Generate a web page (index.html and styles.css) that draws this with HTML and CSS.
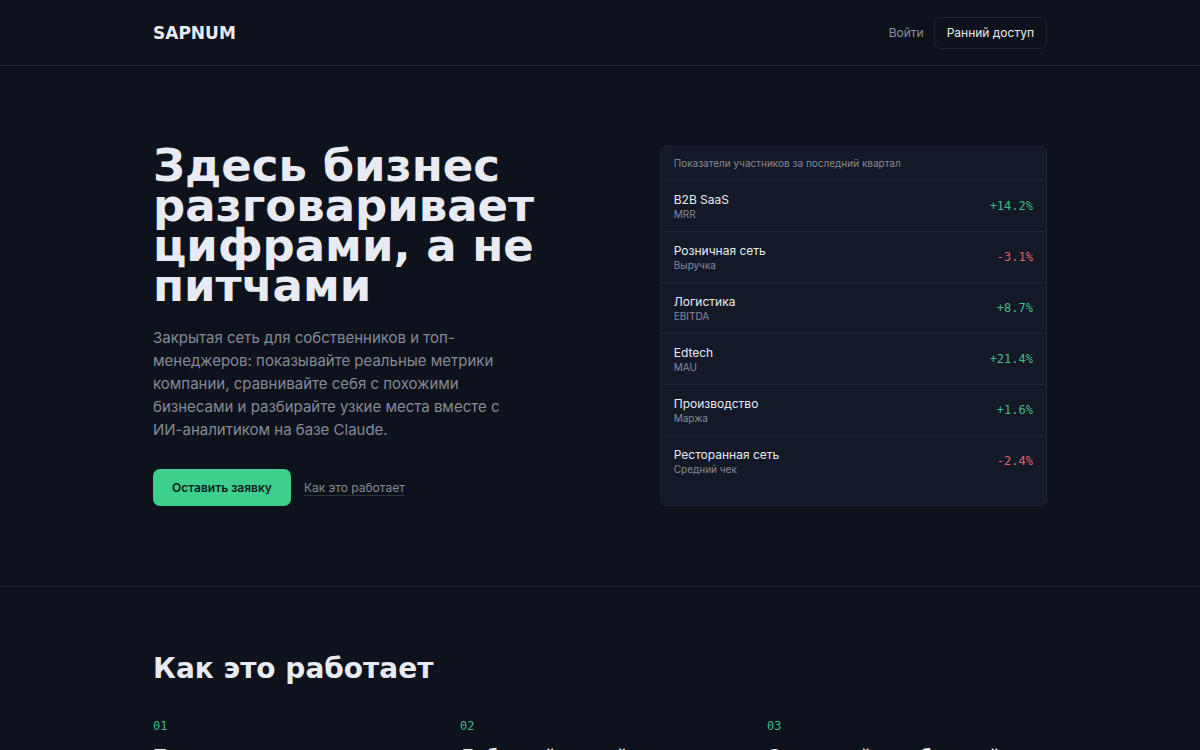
FILE: index.html
```html
<!DOCTYPE html>
<html lang="ru">
<head>
    <meta charset="UTF-8">
    <meta name="viewport" content="width=device-width, initial-scale=1">
    <title>SAPNUM</title>
    <link rel="stylesheet" href="styles.css">
</head>
<body>
    <header class="header">
        <div class="container header-row">
            <a class="logo" href="#">SAPNUM</a>
            <nav class="nav">
                <a class="nav-link" href="#login">Войти</a>
                <button class="btn-outline" type="button">Ранний доступ</button>
            </nav>
        </div>
    </header>

    <main>
        <section class="hero">
            <div class="container hero-grid">
                <div class="hero-text">
                    <h1>Здесь бизнес разговаривает цифрами, а не питчами</h1>
                    <p>Закрытая сеть для собственников и топ-менеджеров: показывайте реальные метрики компании, сравнивайте себя с похожими бизнесами и разбирайте узкие места вместе с ИИ-аналитиком на базе Claude.</p>
                    <div class="actions">
                        <button class="btn-primary" type="button">Оставить заявку</button>
                        <a class="link-more" href="#how">Как это работает</a>
                    </div>
                </div>

                <div class="card">
                    <div class="card-title">Показатели участников за последний квартал</div>
                    <ul class="metrics">
                        <li>
                            <div><div class="name">B2B SaaS</div><div class="metric">MRR</div></div>
                            <span class="value up">+14.2%</span>
                        </li>
                        <li>
                            <div><div class="name">Розничная сеть</div><div class="metric">Выручка</div></div>
                            <span class="value down">-3.1%</span>
                        </li>
                        <li>
                            <div><div class="name">Логистика</div><div class="metric">EBITDA</div></div>
                            <span class="value up">+8.7%</span>
                        </li>
                        <li>
                            <div><div class="name">Edtech</div><div class="metric">MAU</div></div>
                            <span class="value up">+21.4%</span>
                        </li>
                        <li>
                            <div><div class="name">Производство</div><div class="metric">Маржа</div></div>
                            <span class="value up">+1.6%</span>
                        </li>
                        <li>
                            <div><div class="name">Ресторанная сеть</div><div class="metric">Средний чек</div></div>
                            <span class="value down">-2.4%</span>
                        </li>
                    </ul>
                </div>
            </div>
        </section>

        <section class="how" id="how">
            <div class="container">
                <h2>Как это работает</h2>
                <div class="steps">
                    <div class="step">
                        <span class="num">01</span>
                        <h3>Подключите метрики</h3>
                    </div>
                    <div class="step">
                        <span class="num">02</span>
                        <h3>Добавляйте свой</h3>
                    </div>
                    <div class="step">
                        <span class="num">03</span>
                        <h3>Сравнивайте себя с ней</h3>
                    </div>
                </div>
            </div>
        </section>
    </main>
</body>
</html>
```

FILE: styles.css
```css
* {
    box-sizing: border-box;
}

body {
    margin: 0;
    font-family: Inter, "Liberation Sans", sans-serif;
    font-size: 13px;
    background-color: #0e121d;
    color: #e8ebf3;
}

a {
    color: inherit;
    text-decoration: none;
}

button {
    font-family: inherit;
    font-size: 12px;
    cursor: pointer;
}

h1, h2, h3, .logo {
    font-family: "DejaVu Sans", sans-serif;
    font-weight: bold;
    margin: 0;
}

.container {
    max-width: 942px;
    margin: 0 auto;
    padding: 0 24px;
}

/* header */
.header {
    border-bottom: 1px solid #20252f;
}

.header-row {
    display: flex;
    align-items: center;
    justify-content: space-between;
    min-height: 65px;
}

.logo {
    font-size: 17px;
}

.nav {
    display: flex;
    align-items: center;
    gap: 10px;
}

.nav-link {
    font-size: 12px;
    color: #8b909c;
}

.btn-outline {
    height: 32px;
    padding: 0 12px;
    background: none;
    border: 1px solid #20252f;
    border-radius: 7px;
    color: #e8ebf3;
}

/* hero */
.hero {
    padding: 80px 0;
    border-bottom: 1px solid #20252f;
}

.hero-grid {
    display: grid;
    grid-template-columns: 1.2fr 1fr;
    gap: 42px;
}

h1 {
    font-size: 45px;
    line-height: 40px;
}

.hero-text p {
    max-width: 370px;
    margin: 20px 0 28px;
    font-size: 15px;
    line-height: 23px;
    color: #858a97;
}

.actions {
    display: flex;
    align-items: center;
    gap: 13px;
}

.btn-primary {
    height: 37px;
    padding: 0 19px;
    background-color: #3ecf8e;
    border: none;
    border-radius: 7px;
    color: #0b1a1c;
    font-weight: 600;
}

.link-more {
    font-size: 12px;
    color: #858a97;
    border-bottom: 1px solid #2b313d;
}

/* card */
.card {
    background-color: #131927;
    border: 1px solid #1f2633;
    border-radius: 7px;
}

.card-title {
    padding: 0 13px;
    font-size: 10px;
    line-height: 33px;
    color: #858a97;
    border-bottom: 1px solid #1f2633;
}

.metrics {
    list-style: none;
    margin: 0;
    padding: 0;
}

.metrics li {
    display: flex;
    align-items: center;
    justify-content: space-between;
    height: 51px;
    padding: 0 13px;
    border-bottom: 1px solid #1f2633;
}

.metrics li:last-child {
    height: 50px;
    border-bottom: none;
}

.name {
    font-size: 12px;
    line-height: 16px;
}

.metric {
    font-size: 10px;
    line-height: 13px;
    color: #858a97;
}

.value, .num {
    font-family: "DejaVu Sans Mono", monospace;
    font-size: 12px;
}

.up, .num {
    color: #3fb98a;
}

.down {
    color: #e0606c;
}

/* steps */
.how {
    padding: 64px 0;
}

h2 {
    font-size: 28px;
    line-height: 36px;
}

.steps {
    display: grid;
    grid-template-columns: repeat(3, 1fr);
    gap: 27px;
    margin-top: 32px;
}

.num {
    display: block;
    line-height: 14px;
}

h3 {
    margin-top: 13px;
    font-size: 17px;
    line-height: 20px;
}
```
